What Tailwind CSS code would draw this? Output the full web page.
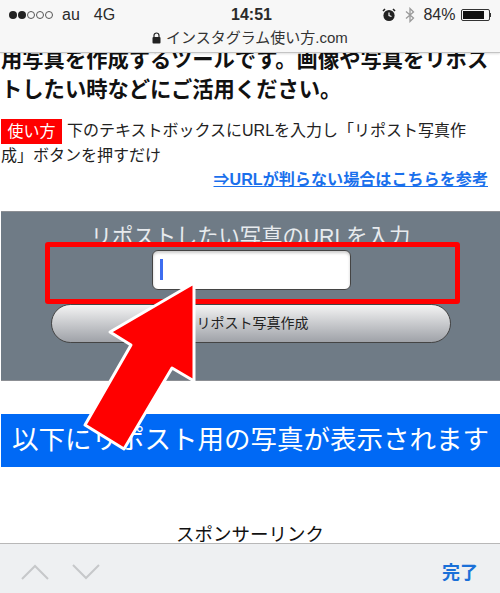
<!DOCTYPE html>
<html lang="ja">
<head>
<meta charset="utf-8">
<script src="https://cdn.jsdelivr.net/npm/@tailwindcss/browser@4"></script>
</head>
<body class="bg-white">
<div class="relative w-[500px] h-[593px] overflow-hidden flex flex-col font-['Liberation_Sans','Noto_Sans_CJK_JP',sans-serif] text-[#1c1c1c]">
  <header class="relative z-10 h-[53px] shrink-0 bg-[#f7f7f7] border-b border-[#c4c4c4] shadow-[0_1px_2px_rgba(0,0,0,0.12)]">
    <div class="h-[28px] pt-[2px] grid grid-cols-3 items-center px-[9px] text-[16px] text-[#2a2a2a]">
      <div class="flex items-center">
        <div class="flex gap-[1px] items-center">
          <span class="w-[8px] h-[8px] rounded-full bg-[#222]"></span>
          <span class="w-[8px] h-[8px] rounded-full bg-[#222]"></span>
          <span class="w-[8px] h-[8px] rounded-full border border-[#555]"></span>
          <span class="w-[8px] h-[8px] rounded-full border border-[#555]"></span>
          <span class="w-[8px] h-[8px] rounded-full border border-[#555]"></span>
        </div>
        <span class="ml-[9px]">au</span>
        <span class="ml-[14px]">4G</span>
      </div>
      <div class="text-center font-bold text-[16px] pl-[3px]">14:51</div>
      <div class="flex items-center justify-end gap-[6px] whitespace-nowrap">
        <svg width="14" height="14" viewBox="0 0 14 14"><circle cx="7" cy="7.5" r="5.6" fill="#222"/><path d="M7 4.5V7.5L9.5 8.5" stroke="#f7f7f7" stroke-width="1.2" fill="none"/><path d="M1 3L3 1M13 3L11 1" stroke="#222" stroke-width="1.6"/></svg>
        <svg width="10" height="16" viewBox="0 0 10 16" class="ml-[3px]"><path d="M1 4.5L8.5 11L5 14.5V1.5L8.5 5L1 11.500" stroke="#9a9a9a" stroke-width="1.3" fill="none"/></svg>
        <span class="ml-[2px]">84%</span>
        <div class="flex items-center -ml-[1px]">
          <div class="w-[29px] h-[12px] border border-[#333] rounded-[2px] p-[1px]"><div class="w-[84%] h-full bg-[#111]"></div></div>
          <div class="w-[1.500px] h-[4px] bg-[#333]"></div>
        </div>
      </div>
    </div>
    <div class="flex items-center justify-center gap-[5px] text-[15px] leading-[20px] text-[#333]">
      <svg width="9" height="12" viewBox="0 0 9 12"><path d="M2 5V3.500a2.500 2.500 0 0 1 5 0V5" stroke="#222" stroke-width="1.200" fill="none"/><rect x="0.500" y="5" width="8" height="6.500" rx="1" fill="#222"/></svg>
      <span>インスタグラム使い方.com</span>
    </div>
  </header>

  <main class="flex-1 min-h-0 overflow-hidden relative">
    <p class="-mt-[8px] pl-[1px] text-[21.300px] leading-[30px] font-bold text-[#111] whitespace-nowrap">用写真を作成するツールです。画像や写真をリポス<br>トしたい時などにご活用ください。</p>
    <p class="mt-[14px] pl-[1px] text-[16px] leading-[24px] text-[#222]"><span class="inline-block bg-[#ff0000] text-white w-[61px] h-[25px] leading-[25px] text-center mr-[5px] align-top">使い方</span>下のテキストボックスにURLを入力し「リポスト写真作<br>成」ボタンを押すだけ</p>
    <p class="-mt-[1px] text-right pr-[12px] leading-[24px]"><a class="text-[16.100px] font-bold text-[#1a70ec] underline">⇒URLが判らない場合はこちらを参考</a></p>

    <section class="mt-[19px] ml-[1px] h-[170px] bg-[#6f7b86] border-y border-[#8c8f94] flex flex-col items-center">
      <h2 class="mt-[10px] h-[28px] text-[21.300px] leading-[30px] text-[#e8ebee] font-normal whitespace-nowrap">リポストしたい写真のURLを入力</h2>
      <div class="ml-[1px] w-[199px] h-[40px] bg-white rounded-[6px] border border-[#444] shadow-[inset_0_2px_3px_rgba(0,0,0,0.2)] pl-[7px] pt-[8px]">
        <div class="w-[3px] h-[21px] bg-[#3d6df0]"></div>
      </div>
      <button class="mt-[14px] w-[400px] h-[39px] rounded-full border border-[#444] bg-linear-to-b from-[#f4f4f4] to-[#9fa2a8] text-[14px] text-[#222] pl-[4px]">リポスト写真作成</button>
    </section>

    <div class="mt-[33px] ml-[1px] h-[53px] bg-[#0069f5] text-white text-[26.500px] leading-[52px] text-center whitespace-nowrap">以下にリポスト用の写真が表示されます</div>
    <p class="mt-[55px] text-[18.500px] leading-[26px] text-center text-[#111]">スポンサーリンク</p>
  </main>

  <footer class="relative z-10 h-[50px] shrink-0 bg-[#eef0f2] border-t border-[#b8b8b8] flex items-center justify-between pl-[20px] pr-[22px]">
    <div class="flex gap-[21px] mt-[6px]">
      <svg width="30" height="18" viewBox="0 0 30 18"><path d="M2 16L15 3L28 16" stroke="#c6c8ca" stroke-width="2" fill="none"/></svg>
      <svg width="30" height="18" viewBox="0 0 30 18"><path d="M2 2L15 15L28 2" stroke="#c6c8ca" stroke-width="2" fill="none"/></svg>
    </div>
    <span class="text-[18px] font-bold text-[#1a70d8] mt-[9px]">完了</span>
  </footer>

  <div class="absolute left-[45px] top-[242px] w-[415px] h-[62px] border-[5px] border-[#ff0000] rounded-[3px] z-20"></div>
  <svg class="absolute left-0 top-0 z-20" width="500" height="593" viewBox="0 0 500 593">
    <path d="M194 283L110 332L131 345L85 425L124 449L172 368L194 381Z" fill="#ff0000" stroke="#fff" stroke-width="3" stroke-linejoin="round"/>
  </svg>
</div>
</body>
</html>
